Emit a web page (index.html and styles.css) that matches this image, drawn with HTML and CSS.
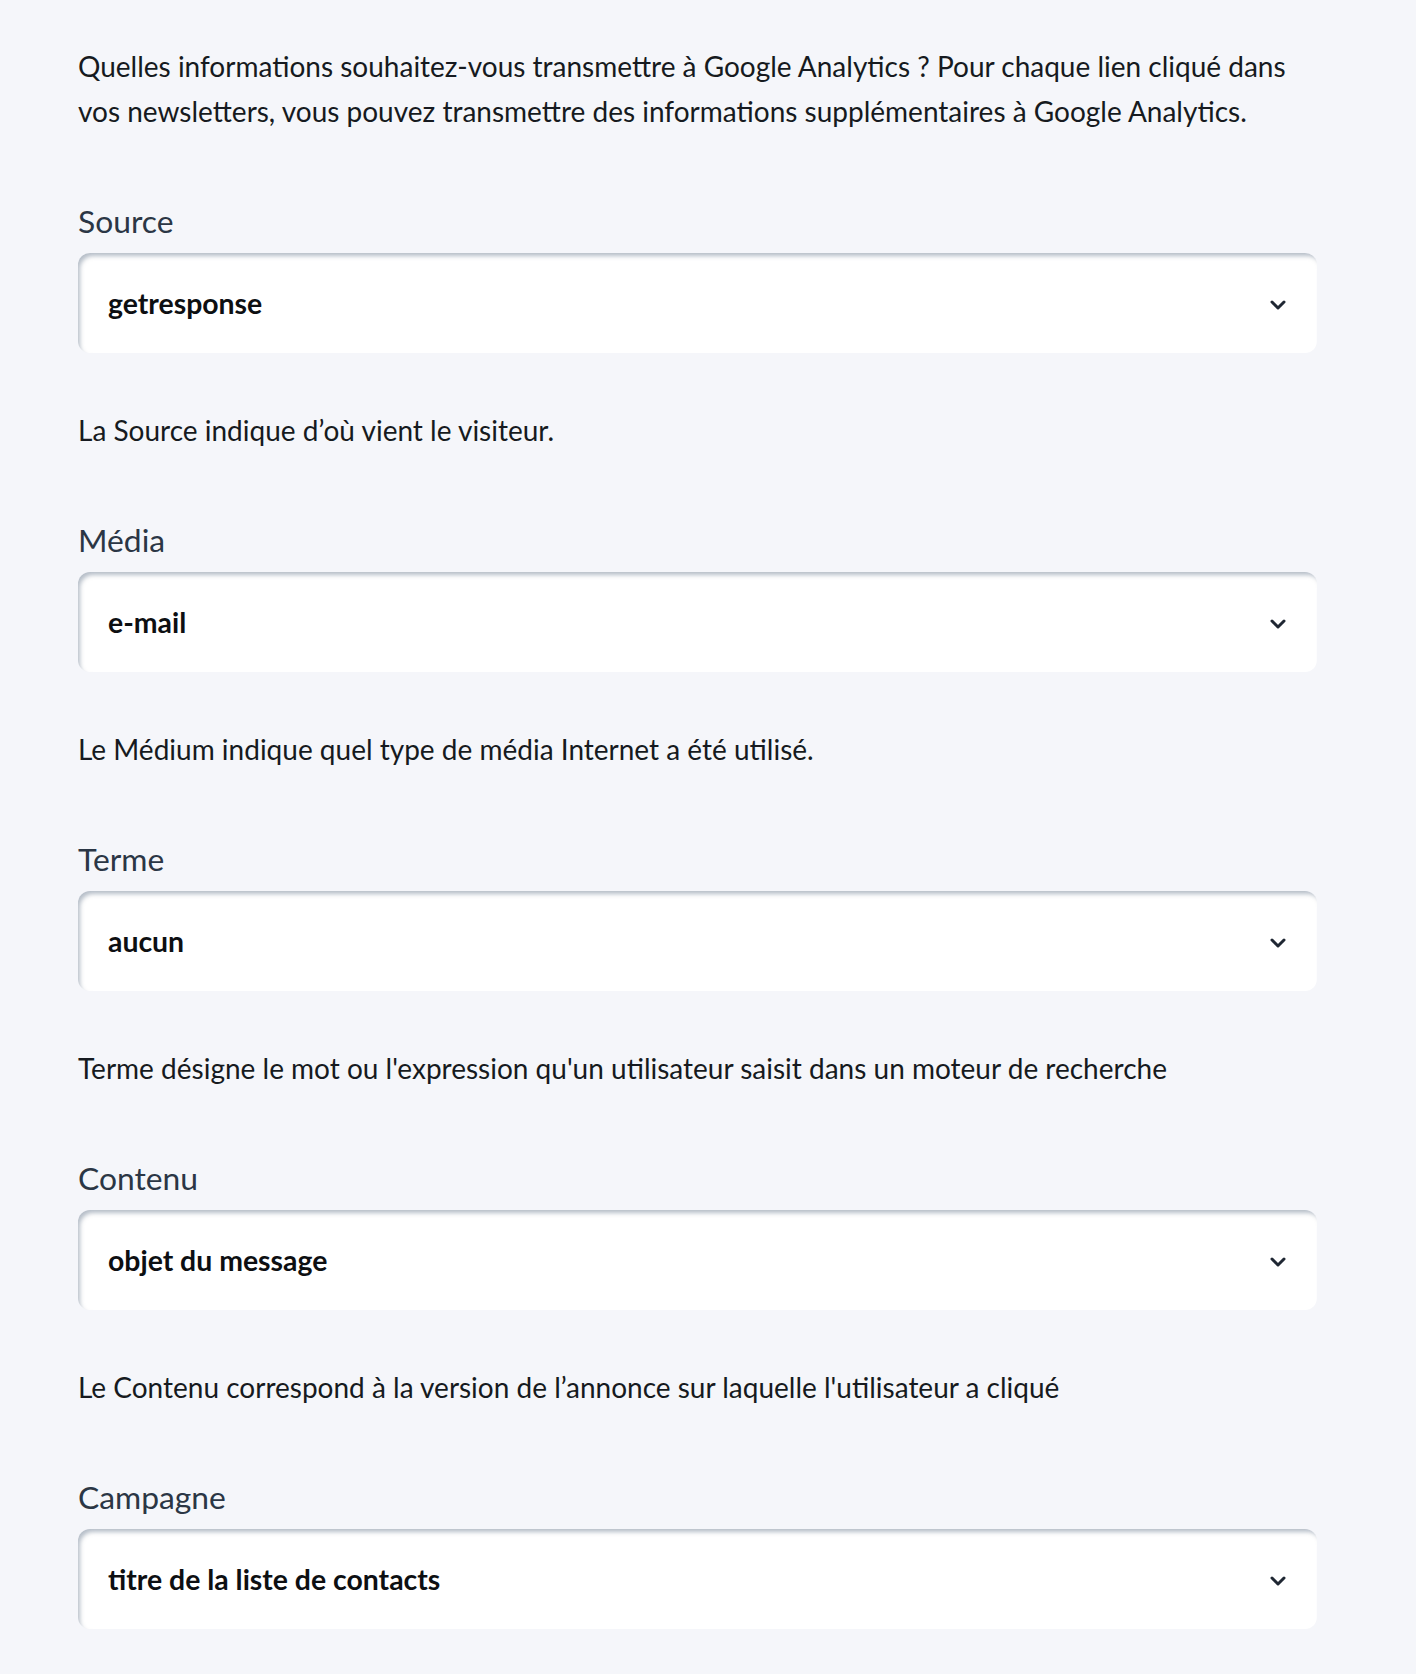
FILE: index.html
```html
<!DOCTYPE html>
<html lang="fr">
  <head>
    <meta charset="UTF-8" />
    <meta name="viewport" content="width=device-width, initial-scale=1.0" />
    <title>Google Analytics</title>
    <link rel="stylesheet" href="styles.css">
  </head>
  <body>
    <div class="ga-settings">
      <p class="intro">
        Quelles informations souhaitez-vous transmettre à Google Analytics ? Pour chaque lien cliqué dans
        vos newsletters, vous pouvez transmettre des informations supplémentaires à Google Analytics.
      </p>

      <div class="field">
        <label class="field-label">Source</label>
        <div class="select">
          <span class="select-value">getresponse</span>
          <svg class="chevron" width="16" height="10" viewBox="0 0 16 10"><path d="M2 2l6 6 6-6" /></svg>
        </div>
        <p class="field-help">La Source indique d’où vient le visiteur.</p>
      </div>

      <div class="field">
        <label class="field-label">Média</label>
        <div class="select">
          <span class="select-value">e-mail</span>
          <svg class="chevron" width="16" height="10" viewBox="0 0 16 10"><path d="M2 2l6 6 6-6" /></svg>
        </div>
        <p class="field-help">Le Médium indique quel type de média Internet a été utilisé.</p>
      </div>

      <div class="field">
        <label class="field-label">Terme</label>
        <div class="select">
          <span class="select-value">aucun</span>
          <svg class="chevron" width="16" height="10" viewBox="0 0 16 10"><path d="M2 2l6 6 6-6" /></svg>
        </div>
        <p class="field-help">Terme désigne le mot ou l'expression qu'un utilisateur saisit dans un moteur de recherche</p>
      </div>

      <div class="field">
        <label class="field-label">Contenu</label>
        <div class="select">
          <span class="select-value">objet du message</span>
          <svg class="chevron" width="16" height="10" viewBox="0 0 16 10"><path d="M2 2l6 6 6-6" /></svg>
        </div>
        <p class="field-help">Le Contenu correspond à la version de l’annonce sur laquelle l'utilisateur a cliqué</p>
      </div>

      <div class="field">
        <label class="field-label">Campagne</label>
        <div class="select">
          <span class="select-value">titre de la liste de contacts</span>
          <svg class="chevron" width="16" height="10" viewBox="0 0 16 10"><path d="M2 2l6 6 6-6" /></svg>
        </div>
      </div>
    </div>
  </body>
</html>
```

FILE: styles.css
```css
body {
  margin: 0;
  font-family: Lato, "Open Sans", sans-serif;
  background-color: #f5f6fa;
  color: #161a20;
}
.ga-settings {
  width: 1239px;
  padding: 44px 0 40px 78px;
}
.intro {
  margin: 0;
  font-size: 28px;
  line-height: 45px;
}
.field {
  margin-top: 68px;
}
.field-label {
  display: block;
  margin-bottom: 13px;
  font-size: 31.8px;
  line-height: 38px;
  color: #2b3645;
}
.select {
  display: flex;
  align-items: center;
  justify-content: space-between;
  height: 100px;
  padding: 0 31px 0 30px;
  background-color: #fff;
  border-radius: 12px;
  box-shadow: inset 3px 4px 4px -1px rgba(110, 125, 145, 0.5);
  box-sizing: border-box;
}
.select-value {
  font-size: 28.4px;
  font-weight: bold;
  color: #0d0f12;
}
.chevron {
  margin-top: 3px;
}
.chevron path {
  fill: none;
  stroke: #1f2733;
  stroke-width: 3;
  stroke-linecap: round;
  stroke-linejoin: round;
}
.field-help {
  margin: 55px 0 0;
  font-size: 28px;
  line-height: 45px;
}
```
